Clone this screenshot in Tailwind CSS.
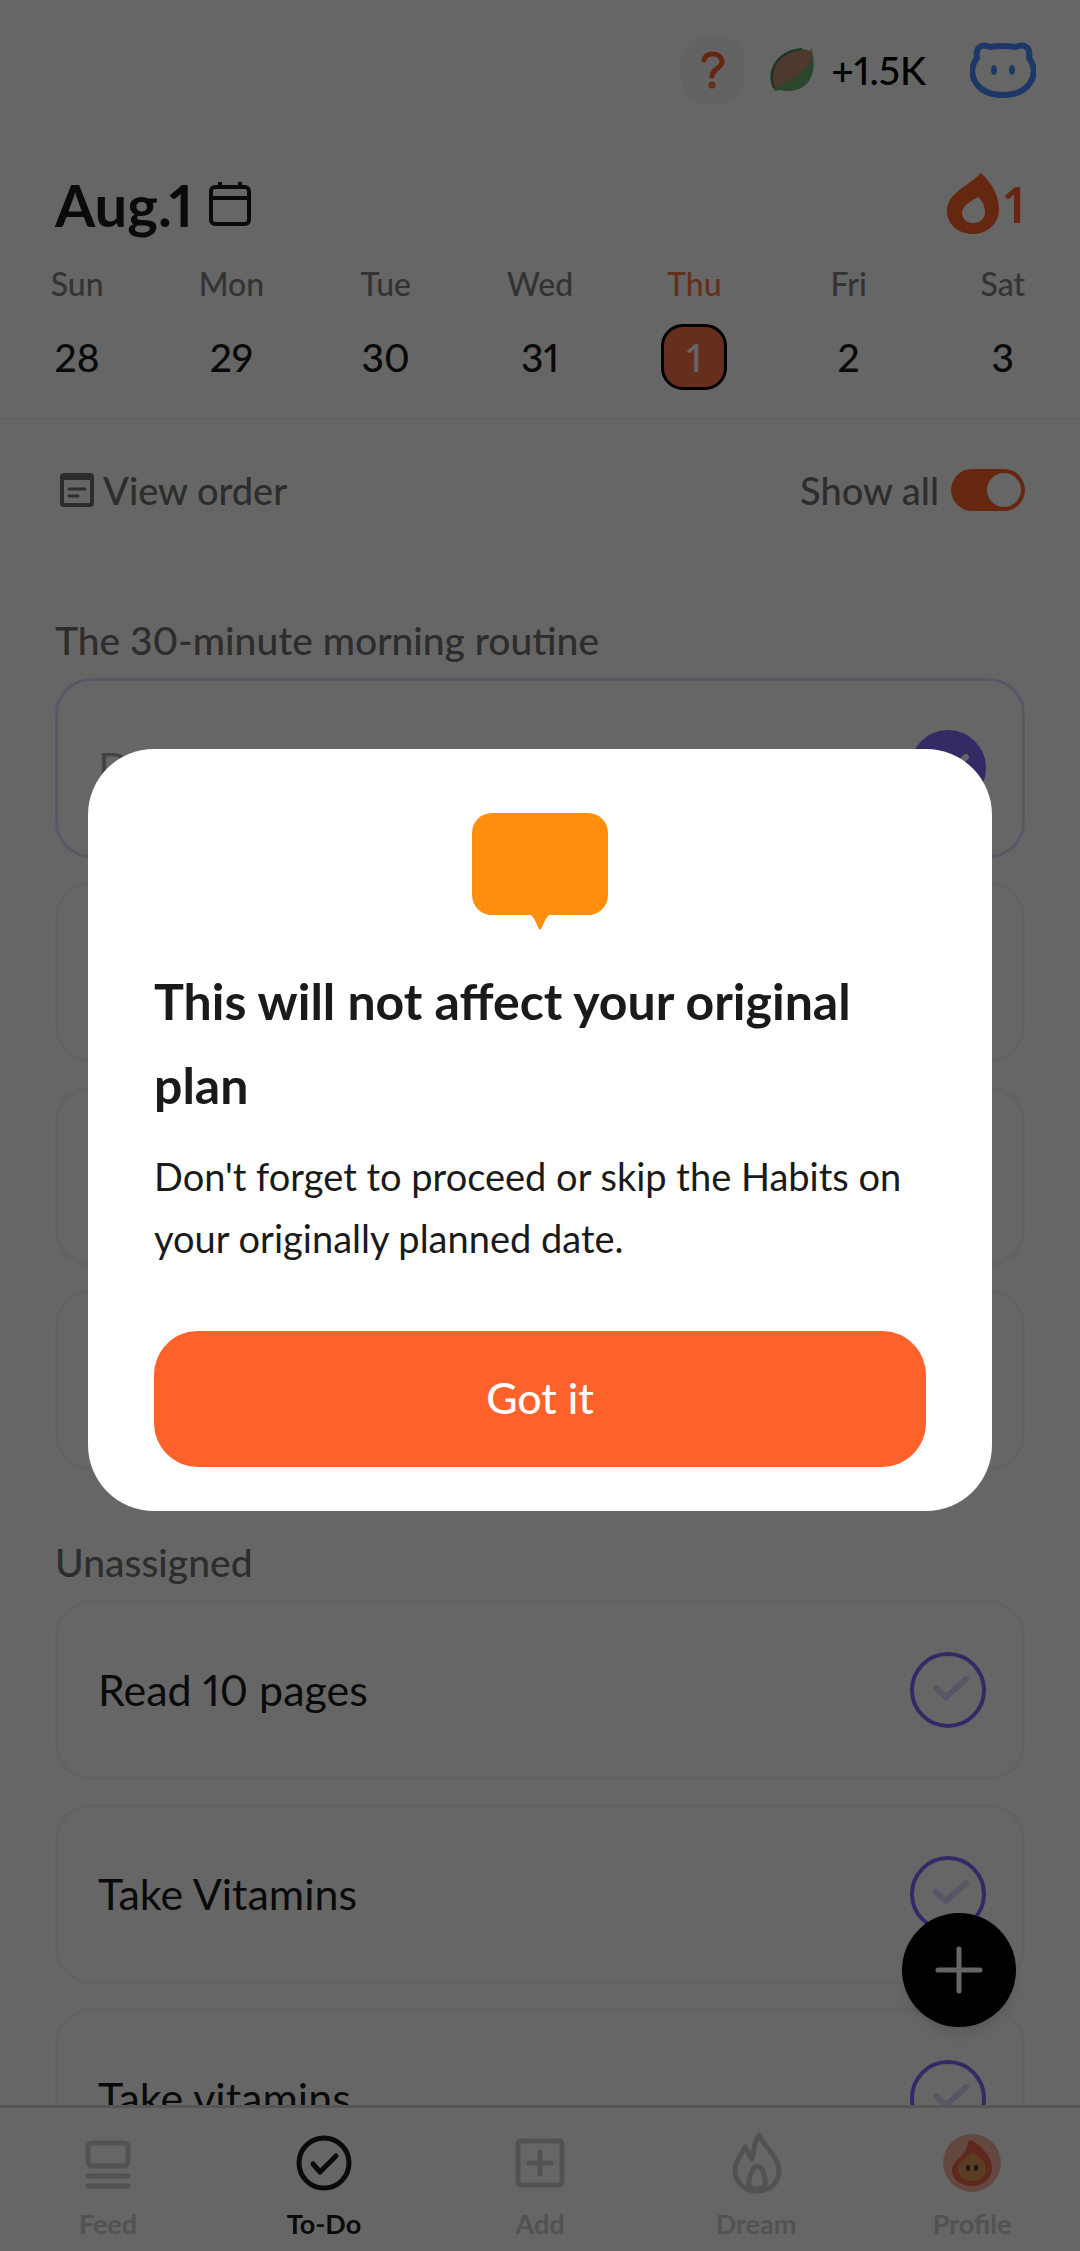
<!DOCTYPE html>
<html lang="en">
<head>
  <meta charset="UTF-8">
  <meta name="viewport" content="width=device-width, initial-scale=1.0">
  <title>To-Do</title>
  <script src="https://cdn.jsdelivr.net/npm/@tailwindcss/browser@4"></script>
</head>
<body class="bg-white font-['Lato','Open_Sans',sans-serif] text-[#1a1a1a] proportional-nums">
  <!-- Shared icons -->
  <svg class="hidden">
    <symbol id="check" viewBox="0 0 76 76">
      <path d="M26 36 L36 45 L56 27" fill="none" stroke="currentColor" stroke-width="6" stroke-linecap="round" stroke-linejoin="miter"/>
    </symbol>
  </svg>

  <div class="flex h-screen flex-col overflow-hidden">
    <!-- Top bar -->
    <header class="border-b-2 border-[#f4f4f4]">
      <div class="flex h-[140px] items-center justify-end pr-11">
        <button aria-label="Help" class="flex h-[68px] w-16 items-center justify-center rounded-3xl bg-[#f8f8f8] text-[#ff612b]">
          <svg width="24" height="38" viewBox="0 0 24 38" fill="none" stroke="currentColor" stroke-width="5" stroke-linecap="round">
            <path d="M3 9 C4 4 8 3 12 3 C17 3 21 6 21 11 C21 17 12 17 11 25"/>
            <circle cx="11" cy="34" r="1" fill="currentColor"/>
          </svg>
        </button>
        <svg class="ml-6" width="46" height="46" viewBox="0 0 46 46">
          <path d="M43 4 C45 11 45 18 44 24 C40 42 26 46 10 43 L6 44 C0 36 0 26 4 18 C10 7 21 2 34 2 L41 4 Z" fill="#6fae73"/>
          <path d="M43 1 C43 9 43 13 40 17 C32 28 19 35 6 41 C1 30 4 21 9 14 C15 7 24 4 36 3 L41 4 Z" fill="#c09070"/>
          <path d="M5 41 C-1 26 7 4 33 2" fill="none" stroke="#4e8157" stroke-width="2"/>
        </svg>
        <span class="ml-4 text-[39px] font-medium text-black">+1.5K</span>
        <svg class="ml-11" width="66" height="56" viewBox="0 0 66 56" fill="none" stroke="#4a8cff" stroke-width="6">
          <path d="M20 5 Q33 3 46 5 C55 1 61 6 59 16 C65 23 65 34 60 41 C54 50 44 53 33 53 C22 53 12 50 6 41 C1 34 1 23 7 16 C5 6 11 1 20 5 Z" stroke-linejoin="round"/>
          <ellipse cx="24" cy="28" rx="3" ry="5" fill="#4a8cff" stroke="none"/>
          <ellipse cx="42" cy="28" rx="3" ry="5" fill="#4a8cff" stroke="none"/>
        </svg>
      </div>

      <div class="flex h-[128px] items-center justify-between px-[55px]">
        <div class="flex items-center gap-4">
          <h1 class="text-[58px] font-bold">Aug.1</h1>
          <button aria-label="Open calendar">
            <svg width="42" height="46" viewBox="0 0 42 46" fill="none" stroke="currentColor" stroke-width="4">
              <rect x="2" y="6" width="38" height="37" rx="4"/>
              <path d="M2 17 H40 M11 1 V6 M31 1 V6"/>
            </svg>
          </button>
        </div>
        <div class="flex items-center gap-1 text-[#ff612b]">
          <svg width="54" height="62" viewBox="0 0 54 62">
            <path fill="currentColor" fill-rule="evenodd" d="M35 0 C45 9 53 22 53 36 C53 51 41 61 27 61 C13 61 1 52 1 38 C1 20 20 15 35 0 Z M32 24 C26 28 16 32 16 40 C16 46 21 50 27 50 C34 50 39 46 39 39 C39 33 36 27 32 24 Z"/>
          </svg>
          <span class="text-[50px] leading-none font-bold">1</span>
        </div>
      </div>

      <div class="grid h-[150px] grid-cols-7 text-center">
        <button class="flex flex-col items-center"><span class="h-14 text-[32px]/8 font-medium text-[#808080]">Sun</span><span class="flex size-[66px] items-center justify-center text-[39px] font-medium">28</span></button>
        <button class="flex flex-col items-center"><span class="h-14 text-[32px]/8 font-medium text-[#808080]">Mon</span><span class="flex size-[66px] items-center justify-center text-[39px] font-medium">29</span></button>
        <button class="flex flex-col items-center"><span class="h-14 text-[32px]/8 font-medium text-[#808080]">Tue</span><span class="flex size-[66px] items-center justify-center text-[39px] font-medium">30</span></button>
        <button class="flex flex-col items-center"><span class="h-14 text-[32px]/8 font-medium text-[#808080]">Wed</span><span class="flex size-[66px] items-center justify-center text-[39px] font-medium">31</span></button>
        <button class="flex flex-col items-center"><span class="h-14 text-[32px]/8 font-medium text-[#ff7349]">Thu</span><span class="flex size-[66px] items-center justify-center rounded-[22px] border-3 border-black bg-[#ff7349] text-[39px] font-medium text-white">1</span></button>
        <button class="flex flex-col items-center"><span class="h-14 text-[32px]/8 font-medium text-[#808080]">Fri</span><span class="flex size-[66px] items-center justify-center text-[39px] font-medium">2</span></button>
        <button class="flex flex-col items-center"><span class="h-14 text-[32px]/8 font-medium text-[#808080]">Sat</span><span class="flex size-[66px] items-center justify-center text-[39px] font-medium">3</span></button>
      </div>
    </header>

    <!-- Habit list -->
    <main class="relative min-h-0 flex-1">
      <div class="h-full overflow-hidden px-[55px]">
        <div class="flex h-[140px] items-center justify-between text-[38px] font-medium text-[#707070]">
          <button class="flex items-center gap-2 pl-1">
            <svg width="36" height="36" viewBox="0 0 36 36" fill="none" stroke="currentColor" stroke-width="4">
              <rect x="3" y="3" width="30" height="30" rx="2"/>
              <path d="M3 5 H33" stroke-width="6"/>
              <path d="M10 17 H26 M10 24 H19" stroke-width="3" stroke-linecap="round"/>
            </svg>
            <span>View order</span>
          </button>
          <label class="flex items-center gap-3">
            <span>Show all</span>
            <input type="checkbox" checked class="flex h-[42px] w-[74px] appearance-none items-center justify-start rounded-full bg-[#cccccc] px-1 before:size-[34px] before:rounded-full before:bg-white checked:justify-end checked:bg-[#ff612b]">
          </label>
        </div>

        <h2 class="mt-[50px] mb-2 text-[39px]/[60px] font-medium text-[#707070]">The 30-minute morning routine</h2>
        <ul class="space-y-6">
          <li class="flex h-[180px] items-center justify-between rounded-[36px] border-3 border-[#e2dcff] pr-9 pl-10">
            <label for="h1" class="text-[43px] text-[#a8a8a8]">D</label>
            <span class="grid text-white">
              <input id="h1" type="checkbox" checked class="col-start-1 row-start-1 size-[76px] appearance-none rounded-full border-4 border-[#8566ff] checked:bg-[#8566ff]">
              <svg class="pointer-events-none col-start-1 row-start-1 size-[76px]"><use href="#check"/></svg>
            </span>
          </li>
          <li class="h-[180px] rounded-[36px] border-3 border-[#f6f6f6]"></li>
          <li class="h-[180px] rounded-[36px] border-3 border-[#f6f6f6]"></li>
          <li class="h-[180px] rounded-[36px] border-3 border-[#f6f6f6]"></li>
        </ul>

        <h2 class="mt-[62px] mb-2 text-[39px]/[60px] font-medium text-[#707070]">Unassigned</h2>
        <ul class="space-y-6">
          <li class="flex h-[180px] items-center justify-between rounded-[36px] border-3 border-[#f6f6f6] pr-9 pl-10">
            <label for="h2" class="text-[43px]">Read 10 pages</label>
            <span class="grid text-[#dcd4ff]">
              <input id="h2" type="checkbox" class="col-start-1 row-start-1 size-[76px] appearance-none rounded-full border-4 border-[#8566ff] checked:bg-[#8566ff]">
              <svg class="pointer-events-none col-start-1 row-start-1 size-[76px]"><use href="#check"/></svg>
            </span>
          </li>
          <li class="flex h-[180px] items-center justify-between rounded-[36px] border-3 border-[#f6f6f6] pr-9 pl-10">
            <label for="h3" class="text-[43px]">Take Vitamins</label>
            <span class="grid text-[#dcd4ff]">
              <input id="h3" type="checkbox" class="col-start-1 row-start-1 size-[76px] appearance-none rounded-full border-4 border-[#8566ff] checked:bg-[#8566ff]">
              <svg class="pointer-events-none col-start-1 row-start-1 size-[76px]"><use href="#check"/></svg>
            </span>
          </li>
          <li class="flex h-[180px] items-center justify-between rounded-[36px] border-3 border-[#f6f6f6] pr-9 pl-10">
            <label for="h4" class="text-[43px]">Take vitamins</label>
            <span class="grid text-[#dcd4ff]">
              <input id="h4" type="checkbox" class="col-start-1 row-start-1 size-[76px] appearance-none rounded-full border-4 border-[#8566ff] checked:bg-[#8566ff]">
              <svg class="pointer-events-none col-start-1 row-start-1 size-[76px]"><use href="#check"/></svg>
            </span>
          </li>
        </ul>
      </div>

      <button aria-label="Add habit" class="absolute right-16 bottom-[78px] flex size-[114px] items-center justify-center rounded-full bg-black text-white shadow-lg">
        <svg width="48" height="48" viewBox="0 0 48 48" stroke="currentColor" stroke-width="5" stroke-linecap="round">
          <path d="M24 3 V45 M3 24 H45"/>
        </svg>
      </button>
    </main>

    <!-- Bottom navigation -->
    <nav class="grid h-[146px] grid-cols-5 border-t-3 border-[#d8d8d8] pt-[22px] text-[27px]/8 font-bold text-[#cccccc]">
      <a href="#" class="flex flex-col items-center gap-3">
        <svg width="66" height="66" viewBox="0 0 66 66" fill="none" stroke="currentColor" stroke-width="5" stroke-linecap="round">
          <rect x="13" y="13" width="40" height="23" rx="4"/>
          <path d="M13 46 H53 M13 56 H53"/>
        </svg>
        Feed
      </a>
      <a href="#" class="flex flex-col items-center gap-3 text-[#1a1a1a]">
        <svg width="66" height="66" viewBox="0 0 66 66" fill="none" stroke="currentColor" stroke-width="5" stroke-linecap="round" stroke-linejoin="round">
          <circle cx="33" cy="33" r="25"/>
          <path d="M22 34 L29 42 L45 26"/>
        </svg>
        To-Do
      </a>
      <a href="#" class="flex flex-col items-center gap-3">
        <svg width="66" height="66" viewBox="0 0 66 66" fill="none" stroke="currentColor" stroke-width="5" stroke-linecap="round">
          <rect x="11" y="11" width="44" height="44" rx="3"/>
          <path d="M33 22 V44 M22 33 H44"/>
        </svg>
        Add
      </a>
      <a href="#" class="flex flex-col items-center gap-3">
        <svg width="66" height="66" viewBox="0 0 66 66" fill="none" stroke="currentColor" stroke-width="5" stroke-linecap="round" stroke-linejoin="round">
          <path d="M36 5 C40 15 56 27 56 41 C56 53 47 61 34 61 C21 61 12 52 12 40 C12 31 18 25 22 17 L29 29 C31 21 31 11 36 5 Z"/>
          <path d="M34 36 C29 37 25 50 26 55 C29 60 40 60 42 55 C43 47 40 37 34 36 Z"/>
        </svg>
        Dream
      </a>
      <a href="#" class="flex flex-col items-center gap-3">
        <svg width="66" height="66" viewBox="0 0 66 66">
          <circle cx="33" cy="33" r="29" fill="#f5b5a3"/>
          <path d="M34 11 C43 17 53 26 53 38 C53 49 44 56 33 56 C22 56 13 50 13 40 C13 30 28 26 29 12 Q31 9 34 11 Z" fill="#ed6547"/>
          <path d="M34 23 C42 27 47 32 47 39 C47 47 41 51 33 51 C25 51 19 47 19 39 C19 32 26 28 34 23 Z" fill="#e39a58"/>
          <ellipse cx="29" cy="38" rx="2" ry="3" fill="#333333"/>
          <ellipse cx="37" cy="38" rx="2" ry="3" fill="#333333"/>
        </svg>
        Profile
      </a>
    </nav>
  </div>

  <!-- Dialog -->
  <div class="fixed inset-0 flex items-center justify-center bg-black/60 px-[88px] pt-2">
    <div role="dialog" aria-modal="true" aria-labelledby="dialogTitle" class="w-full rounded-[66px] bg-white px-[66px] pt-16 pb-11">
      <svg class="mx-auto" width="136" height="118" viewBox="0 0 136 118" fill="#ff8e0d">
        <rect width="136" height="102" rx="20"/>
        <path d="M58 101 H78 Q74 104 70 114 Q68 119 66 114 Q62 104 58 101 Z"/>
      </svg>
      <h2 id="dialogTitle" class="mt-7 text-[50px]/[84px] font-bold">This will not affect your original plan</h2>
      <p class="mt-[18px] text-[38px]/[62px]">Don't forget to proceed or skip the Habits on your originally planned date.</p>
      <button class="mt-[62px] h-[136px] w-full rounded-[44px] bg-[#ff612b] text-[43px] font-medium text-white">Got it</button>
    </div>
  </div>
</body>
</html>
